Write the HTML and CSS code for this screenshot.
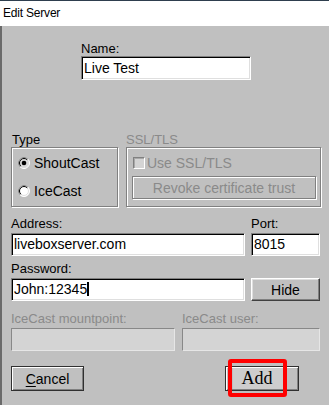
FILE: index.html
```html
<!DOCTYPE html>
<html>
<head>
<meta charset="utf-8">
<link rel="stylesheet" href="styles.css">
</head>
<body>
<div class="window">
  <div class="titlebar">Edit Server</div>
  <div class="client">
    <div class="name-field">
      <div class="lbl">Name:</div>
      <div class="input tall">Live Test</div>
    </div>

    <div class="groups">
      <div class="group type-group">
        <div class="lbl indent">Type</div>
        <div class="box">
          <div class="opt-row">
            <svg class="radio" width="12" height="12" viewBox="0 0 12 12">
              <circle cx="6" cy="6" r="5.5" fill="#d8d8d8" stroke="#fff"/>
              <path d="M2.1 9.9 A5.5 5.5 0 0 1 9.9 2.1" stroke="#808080" fill="none"/>
              <circle cx="6" cy="6" r="4.5" fill="none" stroke="#dfdfdf"/>
              <path d="M2.8 9.2 A4.5 4.5 0 0 1 9.2 2.8" stroke="#000" fill="none"/>
              <circle cx="6" cy="6" r="2.3" fill="#000"/>
            </svg>
            <span>ShoutCast</span>
          </div>
          <div class="opt-row">
            <svg class="radio" width="12" height="12" viewBox="0 0 12 12">
              <circle cx="6" cy="6" r="5.5" fill="#fff" stroke="#fff"/>
              <path d="M2.1 9.9 A5.5 5.5 0 0 1 9.9 2.1" stroke="#808080" fill="none"/>
              <circle cx="6" cy="6" r="4.5" fill="none" stroke="#dfdfdf"/>
              <path d="M2.8 9.2 A4.5 4.5 0 0 1 9.2 2.8" stroke="#000" fill="none"/>
            </svg>
            <span>IceCast</span>
          </div>
        </div>
      </div>

      <div class="group ssl-group">
        <div class="lbl disabled">SSL/TLS</div>
        <div class="box">
          <div class="opt-row check-row">
            <span class="checkbox"></span>
            <span class="disabled">Use SSL/TLS</span>
          </div>
          <div class="btn btn-etched revoke disabled">Revoke certificate trust</div>
        </div>
      </div>
    </div>

    <div class="row-addr">
      <div class="field">
        <div class="lbl">Address:</div>
        <div class="input">liveboxserver.com</div>
      </div>
      <div class="field">
        <div class="lbl">Port:</div>
        <div class="input">8015</div>
      </div>
    </div>

    <div class="row-pass">
      <div class="field">
        <div class="lbl">Password:</div>
        <div class="input">John:12345<span class="caret"></span></div>
      </div>
      <div class="field">
        <div class="lbl">&nbsp;</div>
        <div class="btn btn-raised hide">Hide</div>
      </div>
    </div>

    <div class="row-ice">
      <div class="field">
        <div class="lbl disabled">IceCast mountpoint:</div>
        <div class="input input-disabled"></div>
      </div>
      <div class="field">
        <div class="lbl disabled">IceCast user:</div>
        <div class="input input-disabled"></div>
      </div>
    </div>

    <div class="actions">
      <div class="btn btn-default cancel"><span class="ul">C</span>ancel</div>
      <div class="add-wrap">
        <div class="btn btn-default add">Add</div>
        <div class="highlight"></div>
      </div>
    </div>
  </div>
</div>
</body>
</html>
```

FILE: styles.css
```css
* {
  box-sizing: border-box;
}

body {
  margin: 0;
  background: #c0c0c0;
  font-family: "Liberation Sans", Arial, sans-serif;
  color: #000;
}

.window {
  width: 329px;
  height: 405px;
  background: #c0c0c0;
  overflow: hidden;
}

.titlebar {
  height: 26px;
  border-top: 1px solid #2e3e4e;
  background: #fff;
  font-size: 12px;
  line-height: 25px;
  padding-left: 3px;
  letter-spacing: -0.2px;
}

.client {
  height: 379px;
  border-left: 2px solid #6a6a6a;
  padding: 15px 0 0 9px;
}

.lbl {
  font-size: 13px;
  line-height: 15px;
  white-space: nowrap;
}

.indent {
  padding-left: 1px;
}

.disabled {
  color: #8a8a8a;
}

.name-field {
  margin-left: 70px;
  width: 170px;
}

.input {
  height: 23px;
  background: #fff;
  border: 1px solid;
  border-color: #808080 #fff #fff #808080;
  box-shadow: inset 1px 1px #000, inset -1px -1px #dfdfdf;
  font-size: 14px;
  line-height: 21px;
  padding-left: 2px;
  white-space: nowrap;
  overflow: hidden;
}

.input.tall {
  height: 24px;
  line-height: 22px;
}

.input-disabled {
  background: #d4d4d4;
  border-color: #888 #e6e6e6 #e6e6e6 #888;
  box-shadow: none;
}

.caret {
  display: inline-block;
  width: 2px;
  height: 14px;
  background: #000;
  vertical-align: -2px;
}

.groups {
  display: flex;
  gap: 8px;
  margin-top: 52px;
}

.type-group {
  width: 107px;
}

.ssl-group {
  width: 195px;
}

.box {
  height: 60px;
  border: 1px solid #808080;
  box-shadow: inset 1px 1px #fff, 1px 1px #fff;
  padding: 5px 0 0 6px;
}

.ssl-group .box {
  padding-left: 5px;
}

.opt-row {
  height: 20px;
  display: flex;
  align-items: center;
  gap: 4px;
  font-size: 14px;
  white-space: nowrap;
}

.opt-row + .opt-row {
  margin-top: 8px;
}

.check-row {
  padding-left: 1px;
  gap: 2px;
}

.checkbox {
  width: 12px;
  height: 12px;
  background: #d4d4d4;
  border: 1px solid;
  border-color: #808080 #fff #fff #808080;
  box-shadow: inset 1px 1px #a8a8a8;
}

.btn {
  display: flex;
  align-items: center;
  justify-content: center;
  font-size: 14px;
  background: #c0c0c0;
  white-space: nowrap;
}

.btn-etched {
  border: 1px solid #808080;
  box-shadow: inset 1px 1px #fff, 1px 1px #fff;
}

.btn-raised {
  border: 1px solid;
  border-color: #fff #404040 #404040 #fff;
  box-shadow: inset -1px -1px #808080, inset 1px 1px #dfdfdf;
}

.btn-default {
  border: 1px solid #303030;
  box-shadow: inset 1px 1px #fff, inset -1px -1px #808080;
}

.revoke {
  width: 184px;
  height: 23px;
  margin-top: 3px;
}

.row-addr,
.row-pass {
  display: grid;
  grid-template-columns: 234px 69px;
  column-gap: 6px;
}

.row-addr {
  margin-top: 9px;
}

.row-pass {
  margin-top: 5px;
}

.field .lbl {
  margin-bottom: 2px;
}

.hide {
  height: 23px;
}

.row-ice {
  display: grid;
  grid-template-columns: 164px 138px;
  column-gap: 7px;
  margin-top: 10px;
}

.actions {
  display: flex;
  justify-content: space-between;
  width: 288px;
  margin-top: 15px;
}

.cancel {
  width: 73px;
  height: 25px;
}

.ul {
  text-decoration: underline;
  text-underline-offset: 2px;
}

.add-wrap {
  position: relative;
}

.add {
  width: 74px;
  height: 25px;
  font-family: "Liberation Serif", "Times New Roman", serif;
  font-size: 18px;
  color: #000;
  padding-right: 10px;
  background: linear-gradient(to right, #c0c0c0 7px, #cdcdcd 7px, #cdcdcd 58px, #c0c0c0 58px);
}

.highlight {
  position: absolute;
  left: 3px;
  top: -7px;
  width: 59px;
  height: 38px;
  border: 4px solid #f00;
  border-radius: 3px;
  pointer-events: none;
}
```
